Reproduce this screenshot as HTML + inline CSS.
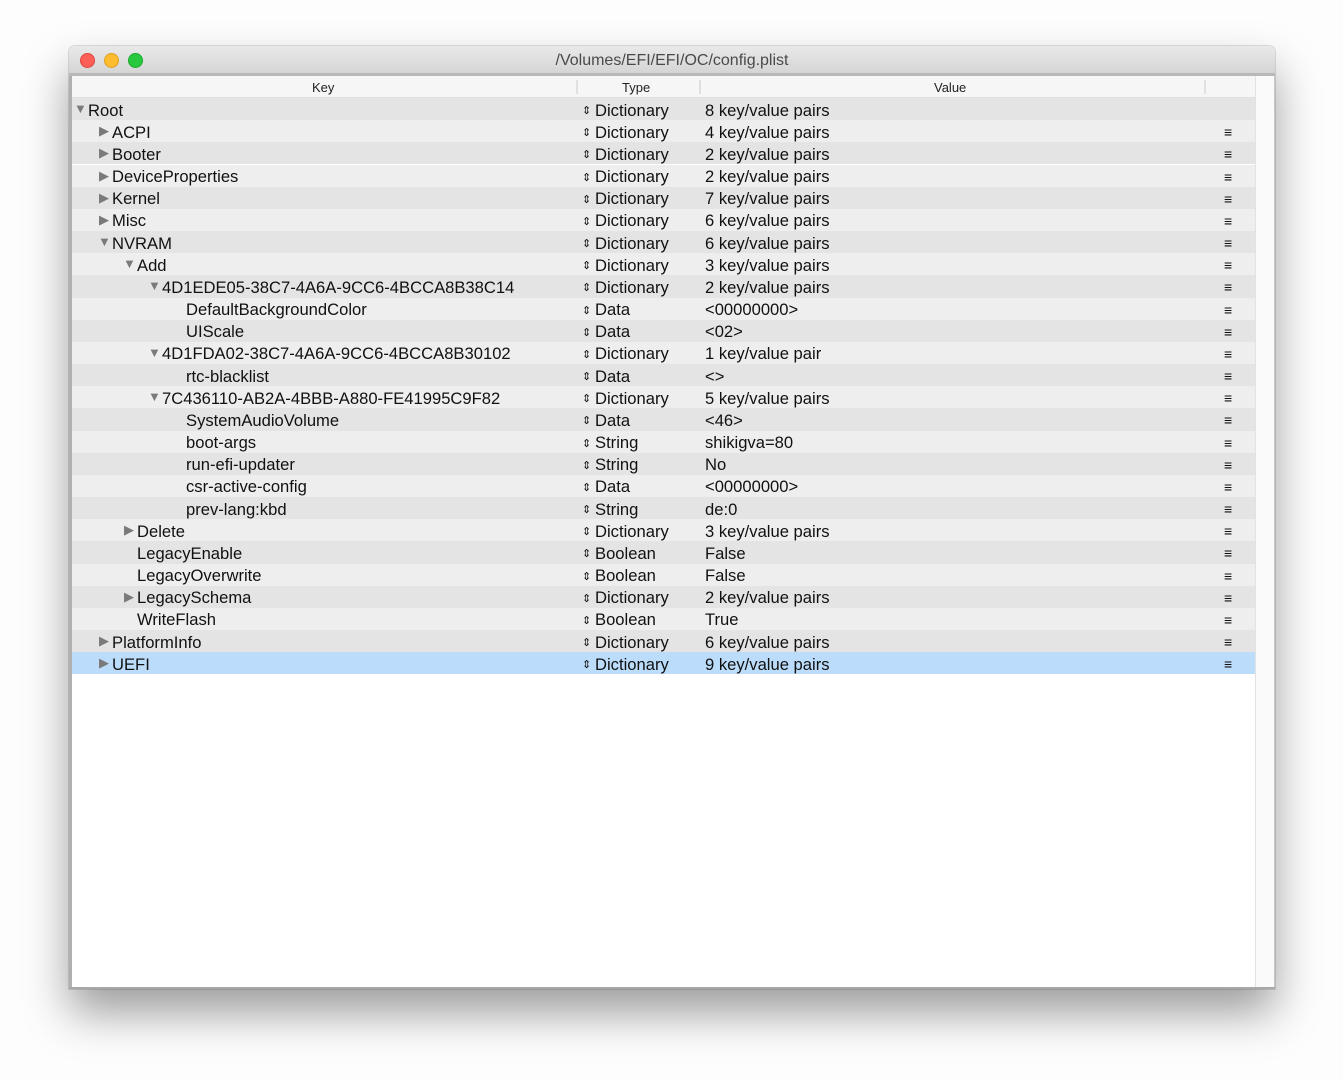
<!DOCTYPE html>
<html><head><meta charset="utf-8"><style>
html,body{margin:0;padding:0;width:1343px;height:1080px;background:#fdfdfd;overflow:hidden;font-family:"Liberation Sans",sans-serif;}
#win{position:absolute;left:69px;top:46px;width:1206px;height:943px;border-radius:6px 6px 0 0;background:#fff;box-shadow:0 24px 45px rgba(0,0,0,0.38),0 0 0 1px rgba(0,0,0,0.12);overflow:hidden;}
#title{position:absolute;left:0;top:0;width:1206px;height:27px;background:linear-gradient(#e9e9e9,#d5d5d5);border-bottom:3px solid #b8b8b8;}
#title .t{position:absolute;left:0;right:0;top:6px;text-align:center;font-size:16px;color:#4a4a4a;}
.dot{position:absolute;top:7px;width:13px;height:13px;border-radius:50%;}
#content{position:absolute;left:3px;top:30px;width:1183px;height:913px;background:#fff;}
#scr{position:absolute;left:1186px;top:30px;width:18px;height:913px;background:#fafafa;border-left:1px solid #e2e2e2;}
#lb{position:absolute;left:0;top:30px;width:3px;height:913px;background:#b0b0b0;}
#rb{position:absolute;right:0;top:30px;width:1px;height:913px;background:#c8c8c8;}
#bb{position:absolute;left:0;bottom:0;width:1206px;height:2px;background:#a8a8a8;}
#hdr{position:absolute;left:0;top:0;width:1183px;height:21px;background:#f6f6f6;border-bottom:1px solid #e0e0e0;font-size:13px;color:#222;}
#hdr span{position:absolute;top:4px;}
.sep{position:absolute;top:4px;width:2px;height:14px;background:#e0e0e0;}
.row{position:absolute;left:0;width:1183px;height:22.17px;font-size:16.6px;color:#111;}
.row span{position:absolute;top:2.5px;white-space:nowrap;}
.tri{font-size:13px;color:#7a7a7a;top:3px!important;}
.ud{font-size:11px;top:6px!important;}
.m{font-size:14px;left:1152px;top:4px!important;}
</style></head><body>
<div id="win">
<div id="title"><div class="dot" style="left:11px;background:#fe5f57;border:0.5px solid #e0443e"></div><div class="dot" style="left:35px;background:#febc2e;border:0.5px solid #dea123"></div><div class="dot" style="left:59px;background:#28c840;border:0.5px solid #1aab29"></div><div class="t">/Volumes/EFI/EFI/OC/config.plist</div></div>
<div id="lb"></div>
<div id="content">
<div id="hdr"><span style="left:240px">Key</span><div class="sep" style="left:504px"></div><span style="left:550px">Type</span><div class="sep" style="left:627px"></div><span style="left:862px">Value</span><div class="sep" style="left:1132px"></div></div>
</div>
<div id="scr"></div>
<div id="rb"></div>
<div id="bb"></div>
</div>
<div id="static" style="position:absolute;left:72px;top:76px;">
<div class="row" style="top:22px;background:#e4e4e4"><span class="tri" style="left:2px">▼</span><span style="left:16px">Root</span><span class="ud" style="left:510px">⇕</span><span style="left:523px">Dictionary</span><span style="left:633px">8 key/value pairs</span></div>
<div class="row" style="top:44.17px;background:#eeeeee"><span class="tri" style="left:27px">▶</span><span style="left:40px">ACPI</span><span class="ud" style="left:510px">⇕</span><span style="left:523px">Dictionary</span><span style="left:633px">4 key/value pairs</span><span class="m">≡</span></div>
<div class="row" style="top:66.34px;background:#e4e4e4"><span class="tri" style="left:27px">▶</span><span style="left:40px">Booter</span><span class="ud" style="left:510px">⇕</span><span style="left:523px">Dictionary</span><span style="left:633px">2 key/value pairs</span><span class="m">≡</span></div>
<div class="row" style="top:88.51px;background:#eeeeee"><span class="tri" style="left:27px">▶</span><span style="left:40px">DeviceProperties</span><span class="ud" style="left:510px">⇕</span><span style="left:523px">Dictionary</span><span style="left:633px">2 key/value pairs</span><span class="m">≡</span></div>
<div class="row" style="top:110.68px;background:#e4e4e4"><span class="tri" style="left:27px">▶</span><span style="left:40px">Kernel</span><span class="ud" style="left:510px">⇕</span><span style="left:523px">Dictionary</span><span style="left:633px">7 key/value pairs</span><span class="m">≡</span></div>
<div class="row" style="top:132.85px;background:#eeeeee"><span class="tri" style="left:27px">▶</span><span style="left:40px">Misc</span><span class="ud" style="left:510px">⇕</span><span style="left:523px">Dictionary</span><span style="left:633px">6 key/value pairs</span><span class="m">≡</span></div>
<div class="row" style="top:155.02px;background:#e4e4e4"><span class="tri" style="left:26px">▼</span><span style="left:40px">NVRAM</span><span class="ud" style="left:510px">⇕</span><span style="left:523px">Dictionary</span><span style="left:633px">6 key/value pairs</span><span class="m">≡</span></div>
<div class="row" style="top:177.19px;background:#eeeeee"><span class="tri" style="left:51px">▼</span><span style="left:65px">Add</span><span class="ud" style="left:510px">⇕</span><span style="left:523px">Dictionary</span><span style="left:633px">3 key/value pairs</span><span class="m">≡</span></div>
<div class="row" style="top:199.36px;background:#e4e4e4"><span class="tri" style="left:76px">▼</span><span style="left:90px">4D1EDE05-38C7-4A6A-9CC6-4BCCA8B38C14</span><span class="ud" style="left:510px">⇕</span><span style="left:523px">Dictionary</span><span style="left:633px">2 key/value pairs</span><span class="m">≡</span></div>
<div class="row" style="top:221.53px;background:#eeeeee"><span style="left:114px">DefaultBackgroundColor</span><span class="ud" style="left:510px">⇕</span><span style="left:523px">Data</span><span style="left:633px">&lt;00000000&gt;</span><span class="m">≡</span></div>
<div class="row" style="top:243.7px;background:#e4e4e4"><span style="left:114px">UIScale</span><span class="ud" style="left:510px">⇕</span><span style="left:523px">Data</span><span style="left:633px">&lt;02&gt;</span><span class="m">≡</span></div>
<div class="row" style="top:265.87px;background:#eeeeee"><span class="tri" style="left:76px">▼</span><span style="left:90px">4D1FDA02-38C7-4A6A-9CC6-4BCCA8B30102</span><span class="ud" style="left:510px">⇕</span><span style="left:523px">Dictionary</span><span style="left:633px">1 key/value pair</span><span class="m">≡</span></div>
<div class="row" style="top:288.04px;background:#e4e4e4"><span style="left:114px">rtc-blacklist</span><span class="ud" style="left:510px">⇕</span><span style="left:523px">Data</span><span style="left:633px">&lt;&gt;</span><span class="m">≡</span></div>
<div class="row" style="top:310.21px;background:#eeeeee"><span class="tri" style="left:76px">▼</span><span style="left:90px">7C436110-AB2A-4BBB-A880-FE41995C9F82</span><span class="ud" style="left:510px">⇕</span><span style="left:523px">Dictionary</span><span style="left:633px">5 key/value pairs</span><span class="m">≡</span></div>
<div class="row" style="top:332.38px;background:#e4e4e4"><span style="left:114px">SystemAudioVolume</span><span class="ud" style="left:510px">⇕</span><span style="left:523px">Data</span><span style="left:633px">&lt;46&gt;</span><span class="m">≡</span></div>
<div class="row" style="top:354.55px;background:#eeeeee"><span style="left:114px">boot-args</span><span class="ud" style="left:510px">⇕</span><span style="left:523px">String</span><span style="left:633px">shikigva=80</span><span class="m">≡</span></div>
<div class="row" style="top:376.72px;background:#e4e4e4"><span style="left:114px">run-efi-updater</span><span class="ud" style="left:510px">⇕</span><span style="left:523px">String</span><span style="left:633px">No</span><span class="m">≡</span></div>
<div class="row" style="top:398.89px;background:#eeeeee"><span style="left:114px">csr-active-config</span><span class="ud" style="left:510px">⇕</span><span style="left:523px">Data</span><span style="left:633px">&lt;00000000&gt;</span><span class="m">≡</span></div>
<div class="row" style="top:421.06px;background:#e4e4e4"><span style="left:114px">prev-lang:kbd</span><span class="ud" style="left:510px">⇕</span><span style="left:523px">String</span><span style="left:633px">de:0</span><span class="m">≡</span></div>
<div class="row" style="top:443.23px;background:#eeeeee"><span class="tri" style="left:52px">▶</span><span style="left:65px">Delete</span><span class="ud" style="left:510px">⇕</span><span style="left:523px">Dictionary</span><span style="left:633px">3 key/value pairs</span><span class="m">≡</span></div>
<div class="row" style="top:465.4px;background:#e4e4e4"><span style="left:65px">LegacyEnable</span><span class="ud" style="left:510px">⇕</span><span style="left:523px">Boolean</span><span style="left:633px">False</span><span class="m">≡</span></div>
<div class="row" style="top:487.57px;background:#eeeeee"><span style="left:65px">LegacyOverwrite</span><span class="ud" style="left:510px">⇕</span><span style="left:523px">Boolean</span><span style="left:633px">False</span><span class="m">≡</span></div>
<div class="row" style="top:509.74px;background:#e4e4e4"><span class="tri" style="left:52px">▶</span><span style="left:65px">LegacySchema</span><span class="ud" style="left:510px">⇕</span><span style="left:523px">Dictionary</span><span style="left:633px">2 key/value pairs</span><span class="m">≡</span></div>
<div class="row" style="top:531.91px;background:#eeeeee"><span style="left:65px">WriteFlash</span><span class="ud" style="left:510px">⇕</span><span style="left:523px">Boolean</span><span style="left:633px">True</span><span class="m">≡</span></div>
<div class="row" style="top:554.08px;background:#e4e4e4"><span class="tri" style="left:27px">▶</span><span style="left:40px">PlatformInfo</span><span class="ud" style="left:510px">⇕</span><span style="left:523px">Dictionary</span><span style="left:633px">6 key/value pairs</span><span class="m">≡</span></div>
<div class="row" style="top:576.25px;background:#bcdcfb"><span class="tri" style="left:27px">▶</span><span style="left:40px">UEFI</span><span class="ud" style="left:510px">⇕</span><span style="left:523px">Dictionary</span><span style="left:633px">9 key/value pairs</span><span class="m">≡</span></div>
</div>
</body></html>
